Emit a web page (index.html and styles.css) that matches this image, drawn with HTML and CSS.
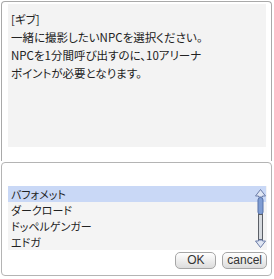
FILE: index.html
```html
<!DOCTYPE html>
<html lang="ja">
<head>
  <meta charset="UTF-8" />
  <title>NPC選択</title>
  <link rel="stylesheet" href="styles.css">
</head>
<body>
  <div class="msg">
    <div class="msg-text">
      [ギブ]<br>
      一緒に撮影したいNPCを選択ください。<br>
      NPCを1分間呼び出すのに、10アリーナ<br>
      ポイントが必要となります。
    </div>
  </div>

  <div class="menu">
    <div class="list">
      <ul class="items">
        <li class="sel">バフォメット</li>
        <li>ダークロード</li>
        <li>ドッペルゲンガー</li>
        <li>エドガ</li>
      </ul>
      <svg class="scroll" width="11" height="59" viewBox="0 0 11 59">
        <path d="M5.5 0.5 L10.5 7 L7.5 7 L7.5 8 L3.5 8 L3.5 7 L0.5 7 Z" fill="#dfe6f3" stroke="#6c7da8"/>
        <rect x="3" y="8.5" width="5" height="17" rx="2.5" fill="#7f9dd3" stroke="#5670a6"/>
        <rect x="3.5" y="25.5" width="4" height="25" fill="#d6dadf" stroke="#5b5f66"/>
        <path d="M5.5 58.5 L10.5 52 L7.5 52 L7.5 51 L3.5 51 L3.5 52 L0.5 52 Z" fill="#dfe6f3" stroke="#6c7da8"/>
      </svg>
    </div>
    <div class="buttons">
      <button class="btn ok">OK</button>
      <button class="btn">cancel</button>
    </div>
  </div>
</body>
</html>
```

FILE: styles.css
```css
body {
  margin: 0;
  width: 274px;
  height: 279px;
  background: #fff;
  color: #222;
  font-family: "Noto Sans CJK JP", "Noto Sans", sans-serif;
  font-size: 11.5px;
  font-feature-settings: "palt";
  overflow: hidden;
}
.msg {
  margin: 1px 2px 0 1px;
  height: 143px;
  border: 1px solid #a9a9a9;
  border-bottom: none;
  border-radius: 4px 4px 0 0;
  padding: 2px 5px 14px 6px;
}
.msg-text {
  height: 143px;
  background: #f3f3f3;
  padding: 6px 2px 0 3px;
  box-sizing: border-box;
  line-height: 18px;
  white-space: nowrap;
}
.menu {
  margin: 1px 2px 0 1px;
  height: 89px;
  border: 1px solid #b4b4b4;
  border-radius: 4px;
  padding: 23px 4px 0 6px;
}
.list {
  display: flex;
  align-items: flex-start;
  background: #f4f4f4;
  height: 64px;
}
.items {
  list-style: none;
  margin: 0;
  padding: 0;
  flex: 1;
  font-size: 11px;
}
.items li {
  height: 16px;
  line-height: 16px;
  padding-left: 3px;
}
.items li.sel {
  background: #c9d8f6;
  margin-right: -11px;
}
.scroll {
  display: block;
  margin: 3px 1px 0 0;
  position: relative;
}
.buttons {
  display: flex;
  justify-content: flex-end;
  gap: 6px;
  margin-top: 2px;
}
.btn {
  height: 17px;
  padding: 0 4px;
  border: 1px solid #a6a6a6;
  border-radius: 5px;
  background: linear-gradient(#ffffff, #dcdcdc);
  font-family: "Liberation Sans", Arial, sans-serif;
  font-size: 12px;
  line-height: 15px;
  color: #333;
}
.btn.ok {
  width: 41px;
}
```
